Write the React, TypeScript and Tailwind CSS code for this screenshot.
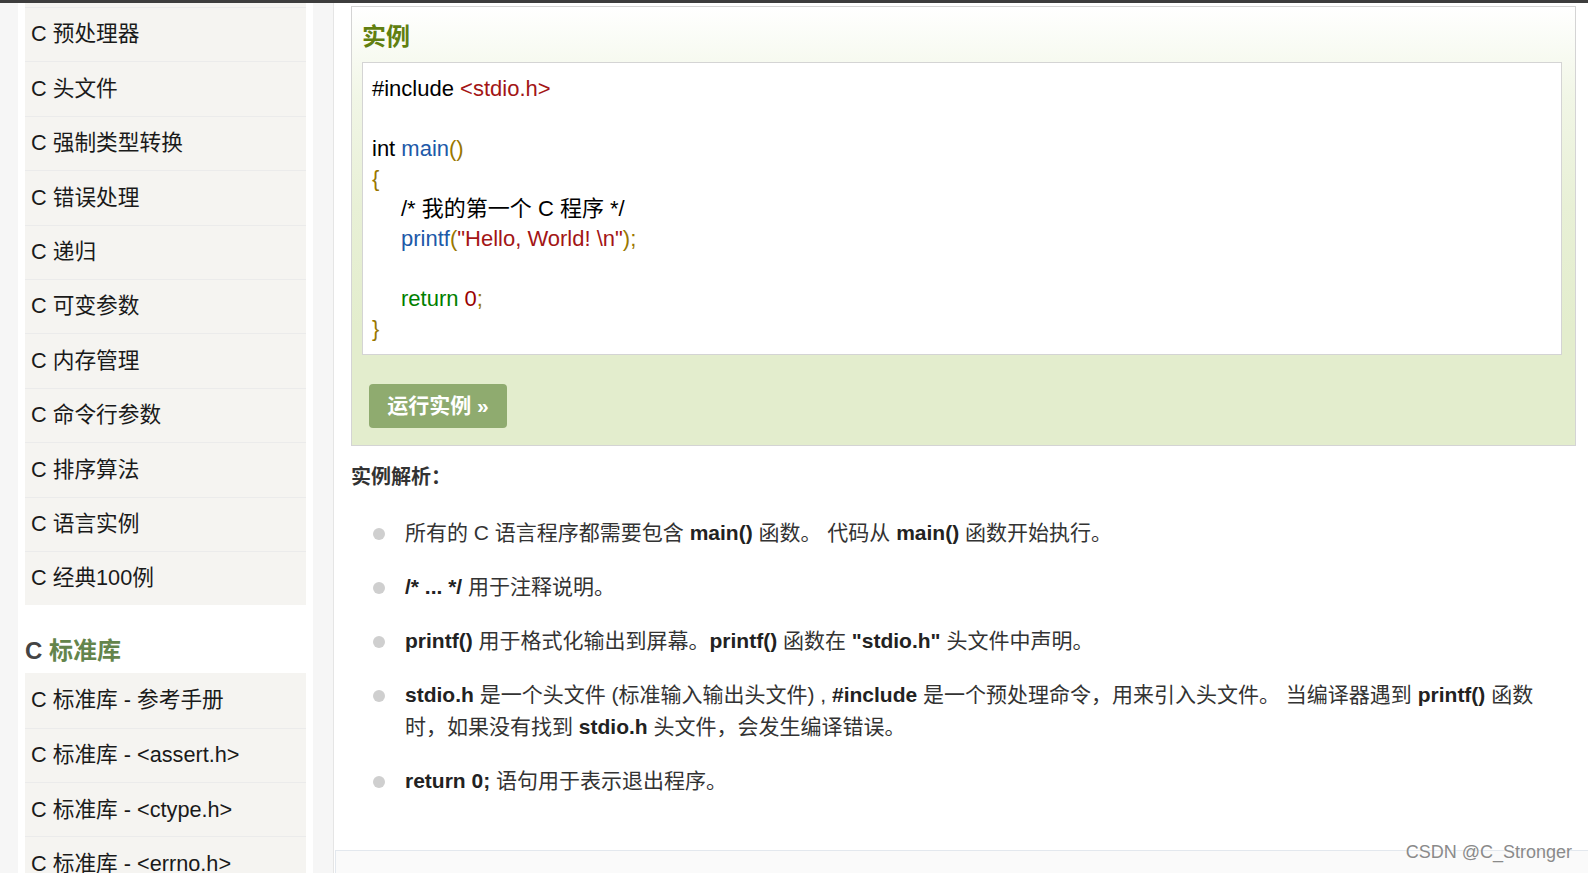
import React from "react";

// 左侧目录
const chapterItems = [
  "C 预处理器",
  "C 头文件",
  "C 强制类型转换",
  "C 错误处理",
  "C 递归",
  "C 可变参数",
  "C 内存管理",
  "C 命令行参数",
  "C 排序算法",
  "C 语言实例",
  "C 经典100例",
];

const libItems = [
  "C 标准库 - 参考手册",
  "C 标准库 - <assert.h>",
  "C 标准库 - <ctype.h>",
  "C 标准库 - <errno.h>",
];

function SideRow({ label, first }: { label: string; first?: boolean }) {
  return (
    <div
      className={
        "h-[54.4px] shrink-0 flex items-center pl-[6px] bg-[#f5f4f1] text-[21.7px] text-[#1a1a1a] " +
        (first ? "" : "border-t border-[#ebebeb]")
      }
    >
      {label}
    </div>
  );
}

function Sidebar() {
  return (
    <div className="w-[295px] shrink-0 bg-white px-[7px] flex flex-col overflow-hidden">
      <div className="h-[4px] shrink-0 bg-[#f5f4f1]" />
      {chapterItems.map((item) => (
        <SideRow key={item} label={item} />
      ))}
      <div className="h-[68px] shrink-0 flex items-center pt-[23px] text-[24px] font-bold">
        <span className="text-[#444]">C&nbsp;</span>
        <span className="text-[#64854c]">标准库</span>
      </div>
      {libItems.map((item, i) => (
        <SideRow key={item} label={item} first={i === 0} />
      ))}
    </div>
  );
}

// 代码颜色
const c = {
  blue: "text-[#2059a8]",
  red: "text-[#a31515]",
  pun: "text-[#997700]",
  kw: "text-[#008000]",
  num: "text-[#990000]",
};

function CodeBlock() {
  return (
    <div className="ml-[10px] mr-[13px] border border-[#d4d4d4] bg-white pt-[11px] pb-[10px] pl-[9px] text-[22px] leading-[30px] text-black">
      <div>
        #include <span className={c.red}>{"<stdio.h>"}</span>
      </div>
      <div>&nbsp;</div>
      <div>
        int <span className={c.blue}>main</span>
        <span className={c.pun}>()</span>
      </div>
      <div className={c.pun}>{"{"}</div>
      <div className="pl-[29px]">/* 我的第一个 C 程序 */</div>
      <div className="pl-[29px]">
        <span className={c.blue}>printf</span>
        <span className={c.pun}>(</span>
        <span className={c.red}>"Hello, World! \n"</span>
        <span className={c.pun}>);</span>
      </div>
      <div>&nbsp;</div>
      <div className="pl-[29px]">
        <span className={c.kw}>return</span> <span className={c.num}>0</span>
        <span className={c.pun}>;</span>
      </div>
      <div className={c.pun}>{"}"}</div>
    </div>
  );
}

function B({ children }: { children: React.ReactNode }) {
  return <span className="font-semibold text-[#222]">{children}</span>;
}

function Bullet({ children }: { children: React.ReactNode }) {
  return (
    <li className="flex mb-[22px]">
      <span className="w-[12px] h-[12px] rounded-full bg-[#cfcfcf] mt-[11px] ml-[22px] shrink-0" />
      <div className="ml-[20px] whitespace-nowrap">{children}</div>
    </li>
  );
}

export default function App() {
  return (
    <div className="w-full h-[873px] overflow-hidden bg-[#f6f6f6] relative font-['Liberation_Sans','Noto_Sans_CJK_SC',sans-serif]">
      <div className="h-[3px] bg-[#3d3d3d]" />
      <div className="flex h-[870px]">
        <div className="w-[18px] shrink-0" />
        <Sidebar />
        <div className="w-[20px] shrink-0" />
        <div className="flex-1 bg-white border-l border-[#e5e5e5] flex flex-col">
          <div className="pl-[17px] pr-[12px] pt-[3px]">
            {/* 实例框 */}
            <div className="border border-[#d4d4d4] bg-[linear-gradient(to_bottom,#ffffff_0px,#f1f6e6_90px,#e8f0d6_200px,#e3edcd_320px)]">
              <div className="h-[55px] flex items-center pt-[4px] pl-[10px] text-[24px] font-bold text-[#617f10]">
                实例
              </div>
              <CodeBlock />
              <div className="pt-[29px] pb-[17px] pl-[17px]">
                <div className="w-[138px] h-[44px] rounded-[4px] bg-[#8fab6f] flex items-center justify-center text-white text-[21px] font-bold">
                  运行实例 »
                </div>
              </div>
            </div>

            <div className="mt-[16px] text-[20px] leading-[30px] font-bold text-[#333]">
              实例解析：
            </div>

            <ul className="mt-[25px] text-[21px] leading-[32px] text-[#333]">
              <Bullet>
                所有的 C 语言程序都需要包含 <B>main()</B> 函数。 代码从 <B>main()</B> 函数开始执行。
              </Bullet>
              <Bullet>
                <B>/* ... */</B> 用于注释说明。
              </Bullet>
              <Bullet>
                <B>printf()</B> 用于格式化输出到屏幕。<B>printf()</B> 函数在 <B>"stdio.h"</B> 头文件中声明。
              </Bullet>
              <Bullet>
                <B>stdio.h</B> 是一个头文件 (标准输入输出头文件) , <B>#include</B> 是一个预处理命令，用来引入头文件。 当编译器遇到 <B>printf()</B> 函数
                <br />
                时，如果没有找到 <B>stdio.h</B> 头文件，会发生编译错误。
              </Bullet>
              <Bullet>
                <B>return 0;</B> 语句用于表示退出程序。
              </Bullet>
            </ul>
          </div>
          <div className="mt-[31px] ml-[1px] flex-1 border-t border-l border-[#e3e8ee] bg-[#fafafa]" />
        </div>
      </div>
      <div className="absolute right-[16px] bottom-[7px] text-[18px] text-[#8a8a8a] [text-shadow:0_0_2px_#fff]">
        CSDN @C_Stronger
      </div>
    </div>
  );
}
